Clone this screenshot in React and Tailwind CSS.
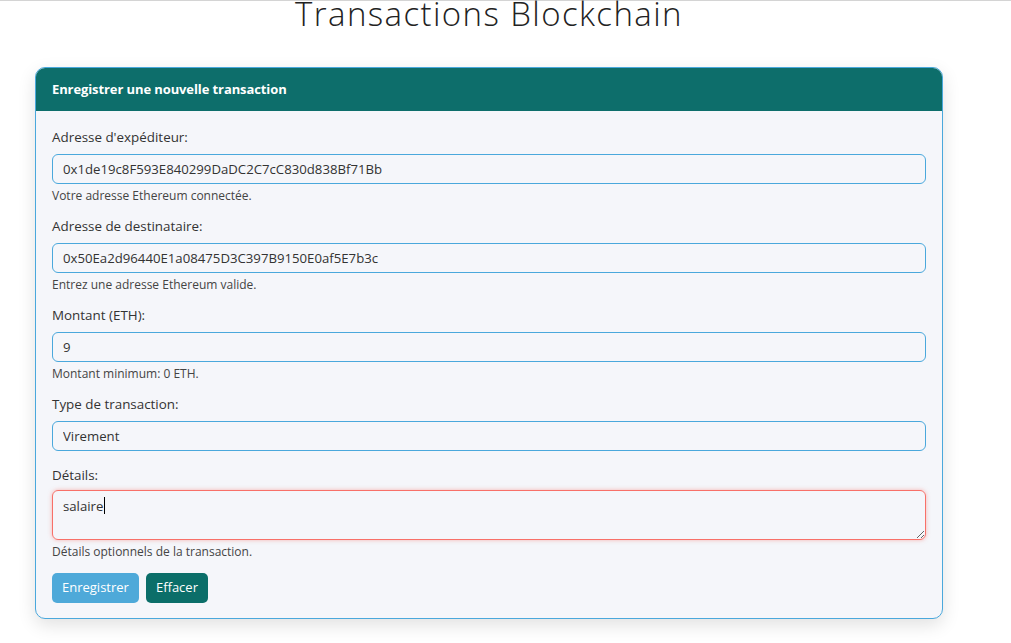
import React, { useState } from 'react';

const fields = [
    { id: 'from', label: "Adresse d'expéditeur:", value: '0x1de19c8F593E840299DaDC2C7cC830d838Bf71Bb', help: 'Votre adresse Ethereum connectée.' },
    { id: 'to', label: 'Adresse de destinataire:', value: '0x50Ea2d96440E1a08475D3C397B9150E0af5E7b3c', help: 'Entrez une adresse Ethereum valide.' },
    { id: 'amount', label: 'Montant (ETH):', value: '9', help: 'Montant minimum: 0 ETH.' },
];

export default function App() {
    const [details, setDetails] = useState('salaire');

    return (
        <div className="min-h-screen bg-white border-t border-[#d4d4d4] font-['Open_Sans',sans-serif] text-[#333]">
            <div className="w-[908px] ml-[35px]">
                <h1 className="-mt-[6px] text-center text-[33px] leading-[38px] font-light tracking-[1.4px] text-[#222]">
                    Transactions Blockchain
                </h1>

                <div className="mt-[34px] rounded-[10px] border border-[#4aa8dc] bg-[#f5f6fa] shadow-[0_6px_18px_rgba(0,0,0,0.12)] overflow-hidden">
                    <div className="h-[43px] bg-[#0d6e6b] px-4 flex items-center">
                        <span className="text-white text-[13px] font-bold tracking-[-0.1px]">Enregistrer une nouvelle transaction</span>
                    </div>

                    <form className="px-4 pt-[17px] pb-[15px]" onSubmit={(e) => e.preventDefault()}>
                        {fields.map((f) => (
                            <div key={f.id} className="mb-[14px]">
                                <label htmlFor={f.id} className="block text-[13.4px] leading-[18px] mb-[8px]">{f.label}</label>
                                <input
                                    id={f.id}
                                    defaultValue={f.value}
                                    className="block w-full h-[30px] px-[10px] rounded-[6px] border border-[#4aa8dc] bg-transparent text-[13.2px] text-[#333] outline-none"
                                />
                                <p className="mt-[5px] text-[12px] leading-[14px] text-[#444]">{f.help}</p>
                            </div>
                        ))}

                        <div className="mb-[15px]">
                            <label htmlFor="type" className="block text-[13.4px] leading-[18px] mb-[8px]">Type de transaction:</label>
                            <input
                                id="type"
                                defaultValue="Virement"
                                className="block w-full h-[30px] px-[10px] rounded-[6px] border border-[#4aa8dc] bg-transparent text-[13.2px] text-[#333] outline-none"
                            />
                        </div>

                        <div>
                            <label htmlFor="details" className="block text-[13.4px] leading-[18px] mb-[6px]">Détails:</label>
                            <div className="relative">
                                <textarea
                                    id="details"
                                    value={details}
                                    onChange={(e) => setDetails(e.target.value)}
                                    className="block w-full h-[50px] px-[10px] py-[5px] rounded-[6px] border border-[#f87068] bg-transparent text-[13.2px] leading-[20px] text-[#333] outline-none shadow-[0_0_4px_rgba(248,112,104,0.5)] resize-y"
                                />
                                <div className="absolute left-[11px] top-[6px] text-[13.2px] leading-[20px] pointer-events-none">
                                    <span className="invisible">{details}</span>
                                    <span className="inline-block w-px h-[17px] bg-black align-middle -mt-[3px] ml-[1px]" />
                                </div>
                            </div>
                            <p className="mt-[5px] text-[12px] leading-[14px] text-[#444]">Détails optionnels de la transaction.</p>
                        </div>

                        <div className="mt-[14px] flex gap-[7px]">
                            <button type="submit" className="h-[30px] px-[10px] rounded-[5px] bg-[#4ea9d9] text-white text-[13px]">Enregistrer</button>
                            <button type="button" className="h-[30px] px-[10px] rounded-[5px] bg-[#0b6e69] text-white text-[13px]">Effacer</button>
                        </div>
                    </form>
                </div>
            </div>
        </div>
    );
}
